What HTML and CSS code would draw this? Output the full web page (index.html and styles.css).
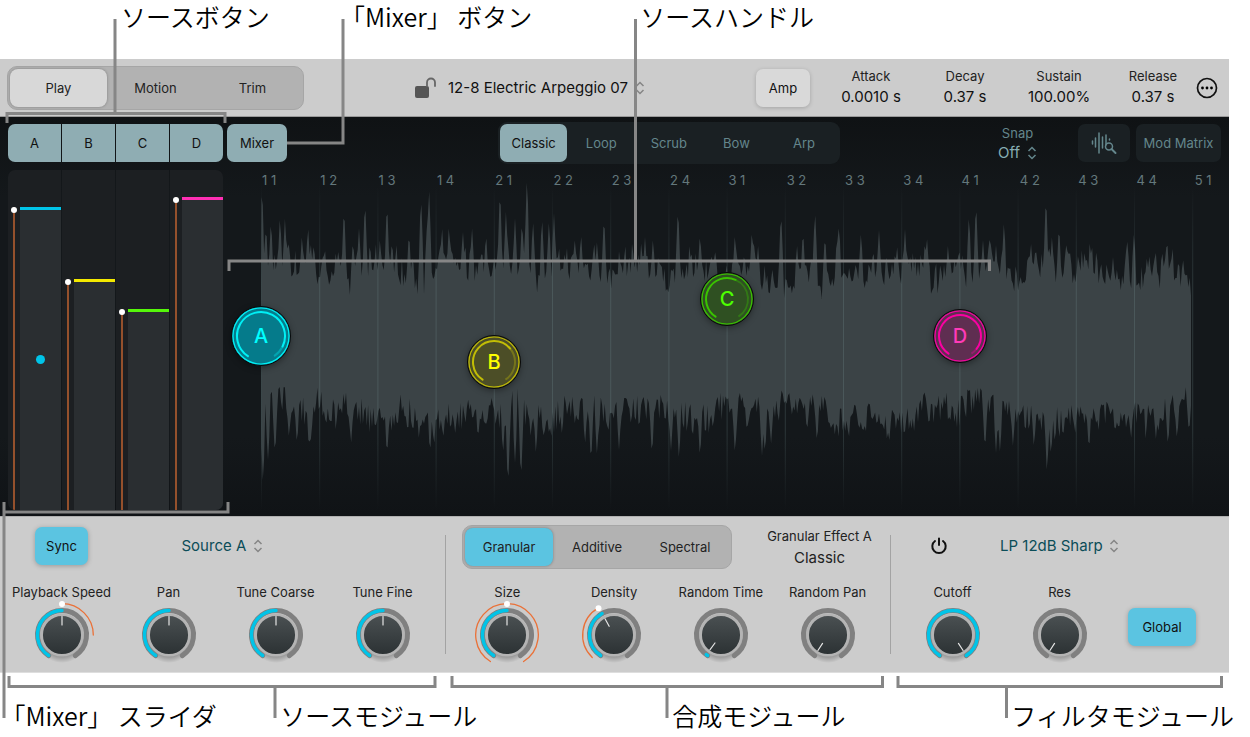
FILE: index.html
```html
<!DOCTYPE html>
<html lang="ja">
  <head>
    <meta charset="UTF-8" />
    <meta name="viewport" content="width=device-width, initial-scale=1.0" />
    <title>Alchemy</title>
    <link rel="stylesheet" href="styles.css">
  </head>
  <body>
    <main class="figure">
      <div class="captions captions-top">
        <span>ソースボタン</span>
        <span><span class="bracket">「</span>Mixer」 ボタン</span>
        <span>ソースハンドル</span>
      </div>

      <section class="plugin">
        <header class="toolbar">
          <div class="segmented">
            <button type="button" class="selected">Play</button>
            <button type="button">Motion</button>
            <button type="button">Trim</button>
          </div>
          <div class="preset">
            <svg class="lock" width="22" height="22" viewBox="0 0 22 22">
              <rect x="0" y="9" width="14" height="12" rx="2" fill="#555" />
              <path d="M12 9V5.500a4 4 0 0 1 8 0V9" fill="none" stroke="#666" stroke-width="1.800" stroke-linecap="round" />
            </svg>
            <select class="preset-select" aria-label="Preset">
              <option>12-8 Electric Arpeggio 07</option>
            </select>
            <svg class="chevrons" width="10" height="14" viewBox="0 0 10 14"><path d="M1.500 5 5 1.500 8.500 5M1.500 9 5 12.500 8.500 9" /></svg>
          </div>
          <button type="button" class="amp">Amp</button>
          <div class="envelope">
            <label>Attack<input type="text" value="0.0010 s"></label>
            <label>Decay<input type="text" value="0.37 s"></label>
            <label>Sustain<input type="text" value="100.00%"></label>
            <label>Release<input type="text" value="0.37 s"></label>
          </div>
          <button type="button" class="icon-button more" aria-label="More">
            <svg width="22" height="22" viewBox="0 0 22 22">
              <circle cx="11" cy="11" r="9.500" fill="none" stroke="#111" stroke-width="1.700" />
              <circle cx="6.500" cy="11" r="1.400" /><circle cx="11" cy="11" r="1.400" /><circle cx="15.500" cy="11" r="1.400" />
            </svg>
          </button>
        </header>

        <div class="stage">
          <div class="stage-bar">
            <div class="source-area">
              <div class="sources">
                <button type="button">A</button>
                <button type="button">B</button>
                <button type="button">C</button>
                <button type="button">D</button>
              </div>
              <button type="button" class="mixer-button">Mixer</button>
            </div>
            <div class="modes">
              <button type="button" class="selected">Classic</button>
              <button type="button">Loop</button>
              <button type="button">Scrub</button>
              <button type="button">Bow</button>
              <button type="button">Arp</button>
            </div>
            <div class="stage-tools">
              <div class="snap">
                <label for="snap">Snap</label>
                <div class="snap-value">
                  <select id="snap"><option>Off</option></select>
                  <svg class="chevrons" width="10" height="14" viewBox="0 0 10 14"><path d="M1.500 5 5 1.500 8.500 5M1.500 9 5 12.500 8.500 9" /></svg>
                </div>
              </div>
              <button type="button" class="tool" aria-label="Analyze">
                <svg width="26" height="24" viewBox="0 0 26 24" fill="none" stroke="#64868c" stroke-width="1.500" stroke-linecap="round">
                  <path d="M1.500 10v3M4.500 7v9M8 2v20M11.500 6v11M15 4v10M18.500 8v1" />
                  <circle cx="18" cy="15.500" r="3.500" /><path d="m20.500 18 4 4" stroke-width="2" />
                </svg>
              </button>
              <button type="button" class="tool matrix">Mod Matrix</button>
            </div>
          </div>

          <div class="stage-body">
            <div class="mixer">
              <label class="strip strip-a" style="--level: 89%"><input type="range" aria-label="Source A level" value="89"><i class="mod"></i><i class="fill"></i><i class="position"></i></label>
              <label class="strip strip-b" style="--level: 68%"><input type="range" aria-label="Source B level" value="68"><i class="mod"></i><i class="fill"></i></label>
              <label class="strip strip-c" style="--level: 59%"><input type="range" aria-label="Source C level" value="59"><i class="mod"></i><i class="fill"></i></label>
              <label class="strip strip-d" style="--level: 92%"><input type="range" aria-label="Source D level" value="92"><i class="mod"></i><i class="fill"></i></label>
            </div>
            <div class="canvas">
              <svg class="wave" viewBox="229 170 1000 346" preserveAspectRatio="none">
                <defs>
                  <linearGradient id="beat" x1="0" y1="0" x2="0" y2="1">
                    <stop offset="0" stop-color="#7fa0a0" stop-opacity="0" />
                    <stop offset=".3" stop-color="#7fa0a0" stop-opacity=".22" />
                    <stop offset=".75" stop-color="#7fa0a0" stop-opacity=".22" />
                    <stop offset="1" stop-color="#7fa0a0" stop-opacity="0" />
                  </linearGradient>
                </defs>
                <path class="wave-path" />
                <g class="beats"></g>
              </svg>
              <div class="ruler">
                <span>1 1</span><span>1 2</span><span>1 3</span><span>1 4</span>
                <span>2 1</span><span>2 2</span><span>2 3</span><span>2 4</span>
                <span>3 1</span><span>3 2</span><span>3 3</span><span>3 4</span>
                <span>4 1</span><span>4 2</span><span>4 3</span><span>4 4</span>
                <span>5 1</span>
              </div>
              <button type="button" class="handle handle-a" data-end="116">A</button>
              <button type="button" class="handle handle-b" data-end="50">B</button>
              <button type="button" class="handle handle-c" data-end="24">C</button>
              <button type="button" class="handle handle-d" data-end="128">D</button>
            </div>
          </div>
        </div>

        <div class="modules">
          <section class="module">
            <div class="module-top source-top">
              <button type="button" class="blue">Sync</button>
              <div class="picker">
                <select aria-label="Source"><option>Source A</option></select>
                <svg class="chevrons" width="10" height="14" viewBox="0 0 10 14"><path d="M1.500 5 5 1.500 8.500 5M1.500 9 5 12.500 8.500 9" /></svg>
              </div>
            </div>
            <div class="knobs">
              <label class="knob" data-angle="0" data-mod="0,90" data-dot="0">Playback Speed</label>
              <label class="knob" data-angle="0">Pan</label>
              <label class="knob" data-angle="0">Tune Coarse</label>
              <label class="knob" data-angle="0">Tune Fine</label>
            </div>
          </section>

          <section class="module">
            <div class="module-top synth-top">
              <div class="segmented">
                <button type="button" class="selected">Granular</button>
                <button type="button">Additive</button>
                <button type="button">Spectral</button>
              </div>
              <div class="effect">
                <span>Granular Effect A</span>
                <span class="effect-name">Classic</span>
              </div>
            </div>
            <div class="knobs">
              <label class="knob" data-angle="0" data-mod="-148,148" data-dot="0">Size</label>
              <label class="knob" data-angle="-29" data-mod="-136,-30" data-dot="-30">Density</label>
              <label class="knob" data-angle="-143">Random Time</label>
              <label class="knob" data-angle="-147">Random Pan</label>
            </div>
          </section>

          <section class="module">
            <div class="module-top filter-top">
              <button type="button" class="icon-button" aria-label="Filter on">
                <svg width="18" height="18" viewBox="0 0 18 18" fill="none" stroke="#111" stroke-width="2" stroke-linecap="round">
                  <path d="M9 1.500v6.500M5 4a6.700 6.700 0 1 0 8 0" />
                </svg>
              </button>
              <div class="picker">
                <select aria-label="Filter type"><option>LP 12dB Sharp</option></select>
                <svg class="chevrons" width="10" height="14" viewBox="0 0 10 14"><path d="M1.500 5 5 1.500 8.500 5M1.500 9 5 12.500 8.500 9" /></svg>
              </div>
            </div>
            <div class="knobs filter-knobs">
              <label class="knob" data-angle="147">Cutoff</label>
              <label class="knob" data-angle="-147">Res</label>
              <button type="button" class="blue global">Global</button>
            </div>
          </section>
        </div>
      </section>

      <div class="captions captions-bottom">
        <span><span class="bracket">「</span>Mixer」 スライダ</span>
        <span>ソースモジュール</span>
        <span>合成モジュール</span>
        <span>フィルタモジュール</span>
      </div>

      <svg class="callouts" viewBox="0 0 1250 737" preserveAspectRatio="none">
        <path d="M115 19V113M7 123V113.500H225V123" />
        <path d="M343 19V143H287" />
        <path d="M635.500 19V261M229 271V261H989.500V271" />
        <path d="M4 502V718M4 512H228V502" />
        <path d="M9 676V686.500H435V676M275 687V718" />
        <path d="M452 676V686.500H882.500V676M667 687V718" />
        <path d="M898 676V686.500H1221.500V676M1006.500 687V718" />
      </svg>
    </main>
    <script src="script.js"></script>
  </body>
</html>
```

FILE: styles.css
```css
* {
  box-sizing: border-box;
}

body {
  margin: 0;
  background-color: #ffffff;
  color: #222;
  font-family: Inter, "Liberation Sans", sans-serif;
  font-size: 13px;
}

button,
select,
input {
  font: inherit;
  color: inherit;
  margin: 0;
  padding: 0;
  border: none;
  background: none;
}

button {
  cursor: pointer;
}

select {
  appearance: none;
  cursor: pointer;
}

svg {
  display: block;
}

.figure {
  position: relative;
}

/* captions */

.captions {
  display: grid;
  color: #000;
  font-family: "Noto Sans CJK JP", sans-serif;
  font-size: 25px;
  font-weight: 350;
  line-height: 32px;
  white-space: nowrap;
}

.captions-top {
  grid-template-columns: 20.5% 25.5% 1fr;
  height: 59px;
  padding-left: 121px;
}

.captions-bottom {
  grid-template-columns: 21.6% 31.7% 27.4% 1fr;
  height: 64px;
  padding: 26px 0 0 13px;
}

.bracket {
  font-feature-settings: "halt";
}

.callouts {
  position: absolute;
  inset: 0;
  width: 100%;
  height: 100%;
  fill: none;
  stroke: #868686;
  stroke-width: 3px;
  pointer-events: none;
}

/* toolbar */

.plugin {
  margin-right: 21px;
  background-color: #cccccc;
}

.toolbar {
  display: flex;
  align-items: center;
  height: 58px;
  padding: 0 11px 0 7px;
  border-bottom: 1px solid #999;
}

.segmented {
  display: flex;
  height: 44px;
  padding: 2px;
  background-color: #b2b2b2;
  border: 1px solid #a6a6a6;
  border-radius: 10px;
}

.segmented button {
  width: 97px;
  border-radius: 8px;
}

.segmented .selected {
  background-color: #d8d8d8;
  box-shadow: 0 0 3px rgba(0, 0, 0, 0.3);
}

.preset {
  display: flex;
  align-items: center;
  margin: 0 auto;
}

.preset-select {
  margin: 0 7px 0 11px;
  color: #111;
  font-size: 15px;
}

.chevrons {
  fill: none;
  stroke: #858585;
  stroke-width: 1.5px;
}

.amp {
  width: 54px;
  height: 38px;
  margin-right: 14px;
  color: #111;
  background-color: #d9d9d9;
  border-radius: 7px;
  box-shadow: 0 1px 4px rgba(0, 0, 0, 0.2);
}

.envelope {
  display: grid;
  grid-template-columns: repeat(4, 94px);
}

.envelope label {
  display: flex;
  flex-direction: column;
  align-items: center;
  line-height: 18px;
}

.envelope input {
  width: 100%;
  height: 24px;
  color: #111;
  font-size: 15px;
  text-align: center;
}

.more {
  margin-left: -4px;
}

/* stage */

.stage {
  background-image: linear-gradient(#0f1214, #14181b 20%, #14181b 80%, #101316);
}

.stage-bar {
  display: grid;
  grid-template-columns: 279px 4fr 342px 3fr auto;
  align-items: center;
  height: 53px;
  padding: 0 8px 2px;
}

.source-area {
  display: flex;
  gap: 4px;
}

.sources {
  display: grid;
  grid-template-columns: repeat(4, 1fr);
  gap: 1px;
  width: 215px;
  height: 38px;
  border-radius: 7px;
  overflow: hidden;
}

.sources button,
.mixer-button,
.modes .selected {
  color: #111;
  background-color: #8fadb3;
}

.mixer-button {
  width: 60px;
  border-radius: 7px;
}

.modes {
  grid-column: 3;
  display: grid;
  grid-template-columns: repeat(5, 1fr);
  height: 42px;
  padding: 2px;
  color: #64868c;
  background-color: #1a2023;
  border-radius: 9px;
}

.modes button {
  border-radius: 7px;
}

.stage-tools {
  grid-column: 5;
  display: flex;
  align-items: center;
  gap: 6px;
  color: #64868c;
}

.snap {
  display: flex;
  flex-direction: column;
  align-items: center;
  margin-right: 35px;
  line-height: 20px;
}

.snap-value {
  display: flex;
  align-items: center;
  gap: 7px;
  color: #86adb3;
  font-size: 15px;
}

.snap .chevrons {
  stroke: #64868c;
}

.tool {
  display: flex;
  align-items: center;
  justify-content: center;
  width: 52px;
  height: 38px;
  background-color: #1a2023;
  border-radius: 7px;
}

.matrix {
  width: 85px;
  white-space: nowrap;
}

.stage-body {
  display: flex;
}

.mixer {
  display: grid;
  grid-template-columns: repeat(4, 1fr);
  gap: 1px;
  width: 215px;
  height: 340px;
  margin-left: 8px;
  border-radius: 7px;
  overflow: hidden;
}

.strip {
  position: relative;
  display: flex;
  align-items: flex-end;
  gap: 5px;
  padding-left: 5px;
  background-color: #1c1f22;
}

.strip-a { --tint: #00c4e8; }
.strip-b { --tint: #f4e900; }
.strip-c { --tint: #55f70a; }
.strip-d { --tint: #ff2fb4; }

.strip input {
  position: absolute;
  inset: 0;
  width: 100%;
  height: 100%;
  opacity: 0;
  writing-mode: vertical-lr;
  direction: rtl;
}

.strip .mod {
  position: relative;
  width: 2px;
  height: var(--level);
  background-color: #94502c;
}

.strip .mod::before {
  content: "";
  position: absolute;
  top: 0;
  left: -2px;
  width: 6px;
  height: 6px;
  background-color: #fff;
  border-radius: 50%;
}

.strip .fill {
  flex: 1;
  height: var(--level);
  background-color: #2a2e31;
  border-top: 3px solid var(--tint);
}

.strip .position {
  position: absolute;
  top: 185px;
  left: 28px;
  width: 9px;
  height: 9px;
  background-color: var(--tint);
  border-radius: 50%;
}

.canvas {
  position: relative;
  flex: 1;
  height: 346px;
  margin-left: 6px;
}

.wave {
  position: absolute;
  inset: 0;
  width: 100%;
  height: 100%;
}

.wave-path {
  fill: #3b4346;
}

.ruler {
  position: relative;
  display: flex;
  padding-left: 3.3%;
  color: #64787c;
  line-height: 20px;
}

.ruler span {
  flex: 0 0 6.03%;
  white-space: nowrap;
}

.handle {
  position: absolute;
  display: flex;
  align-items: center;
  justify-content: center;
  width: 54px;
  height: 54px;
  border-radius: 50%;
  color: var(--tint);
  background-color: var(--shade);
  border: 1px solid #08090a;
  box-shadow: 0 2px 6px rgba(0, 0, 0, 0.35);
  font-size: 20px;
  font-weight: 500;
  transform: translate(-50%, -50%);
}

.handle svg {
  position: absolute;
  inset: 0;
  width: 100%;
  height: 100%;
  fill: none;
  stroke: var(--ring);
}

.handle .rest {
  opacity: 0.35;
}

.handle-a {
  --tint: #00ffff;
  --ring: #00f0f5;
  --shade: #057b8b;
  left: 3.2%;
  top: 48%;
  width: 60px;
  height: 60px;
}

.handle-b {
  --tint: #ffff00;
  --ring: #c2bd05;
  --shade: #4c4e27;
  left: 26.5%;
  top: 55.6%;
}

.handle-c {
  --tint: #4dff00;
  --ring: #3ac400;
  --shade: #2f5022;
  left: 49.8%;
  top: 37.3%;
}

.handle-d {
  --tint: #ff3bb8;
  --ring: #fa00a2;
  --shade: #5f2e51;
  left: 73.1%;
  top: 48%;
}

/* modules */

.modules {
  display: grid;
  grid-template-columns: 446fr 445fr 338fr;
  border-top: 1px solid #b0b0b0;
  border-bottom: 1px solid #dedede;
}

.module {
  position: relative;
  padding: 8px 10px 3px 8px;
}

.module + .module::before {
  content: "";
  position: absolute;
  top: 18px;
  bottom: 18px;
  left: -1px;
  width: 1px;
  background-color: #a3a3a3;
}

.module-top {
  display: grid;
  grid-template-columns: repeat(4, 1fr);
  align-items: center;
  justify-items: center;
  height: 44px;
}

.source-top,
.filter-top {
  padding-bottom: 3px;
}

.source-top .picker {
  grid-column: 2 / 4;
}

.picker {
  display: flex;
  align-items: center;
  gap: 6px;
  color: #0b4d58;
  font-size: 15px;
}

.synth-top {
  grid-template-columns: auto 1fr;
  padding-left: 8px;
}

.synth-top .segmented button {
  width: 88px;
}

.synth-top .selected,
.blue {
  background-color: #5bc4e1;
}

.effect {
  display: flex;
  flex-direction: column;
  align-items: center;
  padding-left: 26px;
  line-height: 21px;
  white-space: nowrap;
}

.effect-name {
  font-size: 15px;
}

.filter-top {
  grid-template-columns: 80px 161px;
}

.blue {
  width: 53px;
  height: 38px;
  color: #111;
  border-radius: 7px;
  box-shadow: 0 1px 5px rgba(0, 0, 0, 0.25);
}

.blue.global {
  width: 68px;
  margin: 25px 0 0 15px;
}

.knobs {
  display: grid;
  grid-template-columns: repeat(4, 1fr);
  padding-top: 14px;
}

.filter-knobs {
  grid-template-columns: 107px 107px 1fr;
}

.knob {
  position: relative;
  display: flex;
  flex-direction: column;
  align-items: center;
  line-height: 18px;
  white-space: nowrap;
}

.knob input {
  position: absolute;
  left: 20px;
  right: 20px;
  bottom: 0;
  height: 68px;
  width: auto;
  opacity: 0;
}

.knob svg {
  fill: none;
  stroke-linecap: round;
}
```

FILE: script.js
```js
const SVG = "http://www.w3.org/2000/svg";

// angles run clockwise from twelve o'clock
const point = (radius, angle) => {
  const rad = (angle * Math.PI) / 180;
  return `${(radius * Math.sin(rad)).toFixed(2)} ${(-radius * Math.cos(rad)).toFixed(2)}`;
};

const arc = (radius, from, to) => {
  const large = to - from > 180 ? 1 : 0;
  return `M${point(radius, from)}A${radius} ${radius} 0 ${large} 1 ${point(radius, to)}`;
};

const createSvg = (size, content) => {
  const svg = document.createElementNS(SVG, "svg");
  svg.setAttribute("width", size);
  svg.setAttribute("height", size);
  svg.setAttribute("viewBox", `${-size / 2} ${-size / 2} ${size} ${size}`);
  svg.innerHTML = content;
  return svg;
};

document.querySelectorAll(".knob").forEach((knob, i) => {
  const angle = Number(knob.dataset.angle);
  let content = `
    <defs>
      <linearGradient id="cap${i}" x1="0" y1="0" x2="0" y2="1">
        <stop offset="0" stop-color="#4b5153" /><stop offset="1" stop-color="#2b3133" />
      </linearGradient>
      <radialGradient id="shadow${i}">
        <stop offset=".7" stop-color="#000" stop-opacity=".3" /><stop offset="1" stop-color="#000" stop-opacity="0" />
      </radialGradient>
    </defs>
    <circle cy="3" r="25" fill="url(#shadow${i})" />
    <path d="${arc(24.5, -147, 147)}" stroke="#808080" stroke-width="5" />
    <circle r="20.3" fill="url(#cap${i})" stroke="#b4b4b4" stroke-width="2.500" />
    <path d="M${point(10, angle)}L${point(18.5, angle)}" stroke="#e4e4e4" stroke-width="1.200" />`;
  if (angle > -147) {
    content += `<path d="${arc(24.5, -147, angle)}" stroke="#00c4e8" stroke-width="3.400" />`;
  }
  if (knob.dataset.mod) {
    const [from, to] = knob.dataset.mod.split(",").map(Number);
    content += `<path d="${arc(31.3, from, to)}" stroke="#ea7138" stroke-width="1.300" />`;
    const [x, y] = point(31, Number(knob.dataset.dot)).split(" ");
    content += `<circle cx="${x}" cy="${y}" r="3" fill="#fff" />`;
  }
  knob.append(createSvg(68, content));

  const input = document.createElement("input");
  input.type = "range";
  input.min = -147;
  input.max = 147;
  input.value = angle;
  knob.append(input);
});

document.querySelectorAll(".handle").forEach((handle) => {
  const size = handle.offsetWidth - 2;
  const radius = size / 2 - 1;
  const end = Number(handle.dataset.end);
  handle.append(
    createSvg(
      size,
      `<circle r="${radius}" stroke-width="1.200" />
       <path d="${arc(radius - 4, -147, end)}" stroke-width="2" stroke-linecap="round" />
       <path class="rest" d="${arc(radius - 4, end, 147)}" stroke-width="2" />`
    )
  );
});

// loudest transients, as x and y pairs
const upperPeaks = [
  262, 185, 266, 225, 271, 220, 280, 215, 285, 217, 289, 242, 302, 235, 308, 225, 311, 244,
  338, 250, 344, 207, 353, 240, 359, 228, 365, 200, 380, 238, 387, 202, 392, 240, 409, 232,
  421, 196, 427, 225, 429, 187, 442, 226, 449, 224, 463, 232, 472, 227, 486, 233, 500, 188,
  506, 210, 515, 218, 522, 220, 527, 175, 533, 220, 542, 217, 549, 220, 554, 213, 575, 238,
  581, 233, 594, 241, 597, 241, 604, 216, 645, 237, 653, 238, 678, 207, 700, 233, 711, 254,
  735, 233, 752, 229, 758, 245, 781, 212, 797, 245, 803, 230, 815, 210, 825, 235, 837, 236,
  839, 224, 861, 232, 879, 230, 897, 245, 905, 229, 925, 240, 927, 238, 948, 245, 969, 214,
  976, 202, 983, 240, 990, 233, 996, 245, 1004, 221, 1031, 243, 1035, 253, 1046, 195,
  1052, 236, 1059, 225, 1066, 243, 1085, 254, 1101, 262, 1113, 260, 1127, 238, 1134, 232,
  1147, 257, 1167, 238, 1183, 259,
];
const lowerPeaks = [
  263, 484, 268, 460, 275, 455, 289, 438, 297, 445, 309, 450, 311, 440, 326, 427, 351, 445,
  387, 457, 394, 427, 419, 440, 430, 455, 434, 448, 455, 435, 478, 440, 486, 427, 503, 455,
  508, 487, 515, 463, 521, 480, 536, 455, 543, 435, 562, 435, 575, 425, 585, 445, 591, 463,
  597, 455, 619, 450, 631, 425, 652, 456, 671, 451, 679, 460, 693, 435, 700, 459, 713, 430,
  735, 455, 747, 433, 762, 456, 765, 455, 771, 445, 792, 415, 807, 432, 817, 443, 832, 427,
  845, 433, 873, 423, 889, 445, 896, 428, 914, 432, 929, 427, 950, 424, 985, 450, 996, 453,
  1000, 453, 1013, 447, 1034, 449, 1047, 475, 1051, 458, 1063, 440, 1075, 436, 1089, 452,
  1115, 435, 1131, 440, 1156, 440, 1168, 447, 1177, 440, 1189, 433,
];

let seed = 7;
const random = () => {
  seed = (seed * 16807) % 2147483647;
  return seed / 2147483647;
};

// quiet is the level between transients, spread the reach of the noise outwards
const envelope = (peaks, quiet, spread) => {
  const points = [];
  let drift = 0.5;
  for (let x = 261.5; x < 1192; x += 1.3) {
    drift += (random() - 0.5) * 0.35 + (0.5 - drift) * 0.08;
    drift = Math.max(0, Math.min(1, drift));
    const noise = 0.5 * drift + 0.5 * Math.pow(random(), 1.5);
    let y = quiet + spread * noise;
    for (let p = 0; p < peaks.length; p += 2) {
      const reach = 1 - Math.abs(x - peaks[p]) / 2.5;
      if (reach > 0) {
        const peakY = quiet + (peaks[p + 1] - quiet) * Math.sqrt(reach);
        y = spread < 0 ? Math.min(y, peakY) : Math.max(y, peakY);
      }
    }
    points.push(`${x.toFixed(1)} ${y.toFixed(1)}`);
  }
  return points;
};

const upper = envelope(upperPeaks, 299, -58);
const lower = envelope(lowerPeaks, 384, 58).reverse();
document
  .querySelector(".wave-path")
  .setAttribute("d", `M${upper.join("L")}L${lower.join("L")}Z`);

let beats = "";
for (let i = 0; i < 17; i++) {
  beats += `<rect x="${(261 + i * 58.2).toFixed(1)}" y="185" width="1" height="325" fill="url(#beat)" />`;
}
document.querySelector(".beats").innerHTML = beats;
```
